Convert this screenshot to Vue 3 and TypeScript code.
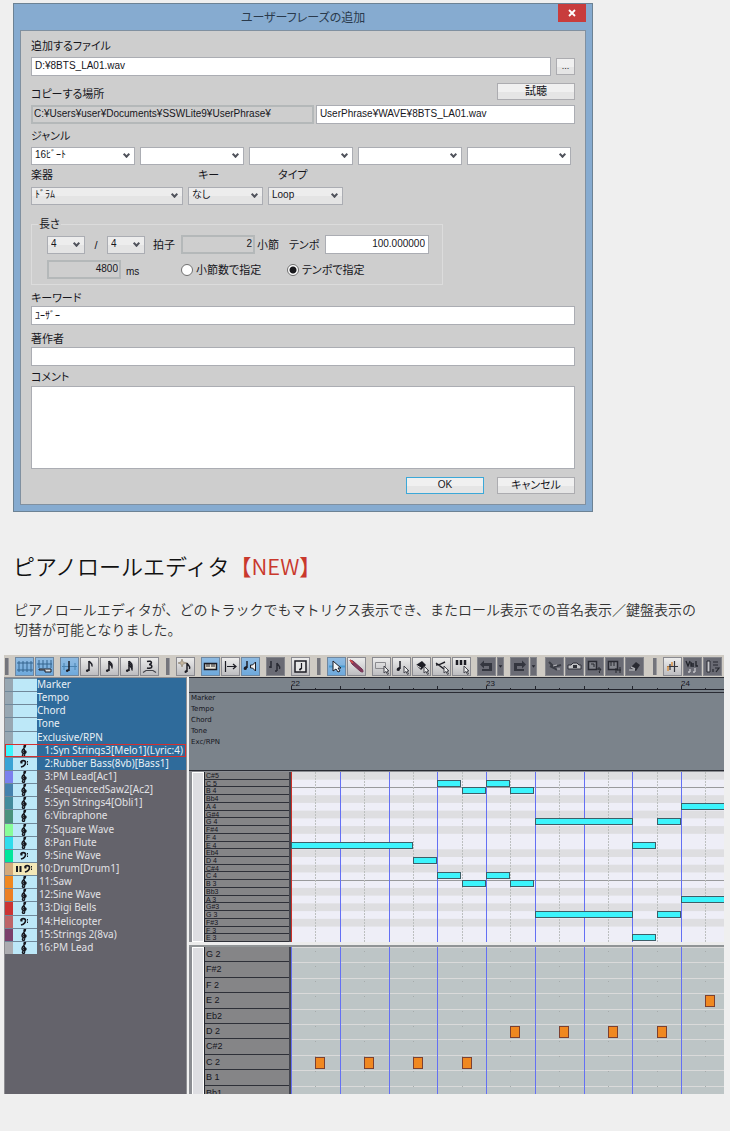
<script setup lang="ts">
import { ref } from 'vue'

const sourceFile = ref('D:¥8BTS_LA01.wav')
const targetFile = ref('UserPhrase¥WAVE¥8BTS_LA01.wav')
const tempo = ref('100.000000')
const keyword = ref('ﾕｰｻﾞｰ')
const author = ref('')
const comment = ref('')
const lengthMode = ref('tempo')
const genres = ['16ﾋﾞｰﾄ', '', '', '', '']

interface Shape { d: string; f?: string; s?: string; w?: number }
interface Tool { label: string; look: 'on' | 'off' | 'dim'; shapes: Shape[]; narrow?: boolean }
interface Group { grip?: boolean; wide?: boolean; tools: Tool[] }

const ink = '#1c1c24'
const arrow: Shape = { d: 'M12 9v7l2-1.500 1.500 3 1-.5-1.500-3H17z', f: '#eee', s: '#44454c', w: 1 }
const flags = (n: number): Shape[] => [
  { d: 'M9 4V14', s: ink, w: 1.5 },
  { d: 'M9 12.500c-2-.5-3.500.5-3 2 1.500 1 3 0 3-2z', f: ink },
  ...Array.from({ length: n }, (_, i) => ({ d: `M9 ${4 + i * 2}c1 2 4 2 3 5.500`, s: ink, w: 1.5 })),
]

const groups: Group[] = [
  { grip: true, tools: [] },
  {
    tools: [
      { label: 'グリッド', look: 'on', shapes: [{ d: 'M4 4V15M8 4V15M12 4V15M16 4V15M2 6H18M2 13H18', s: '#35658e', w: 1 }] },
      { label: 'グリッド鍵盤', look: 'on', shapes: [{ d: 'M4 3V11M8 3V11M12 3V11M16 3V11M2 7H17', s: '#35658e', w: 1 }, { d: 'M4 12H16V15H10V13H4z', f: '#dfe4e8', s: ink, w: 1 }] },
    ],
  },
  {
    tools: [
      { label: '4分音符', look: 'on', shapes: [{ d: 'M2 9.500H17M4 6V13M15 6V13', s: '#4b83b0', w: 1 }, ...flags(0)] },
      { label: '8分音符', look: 'off', shapes: flags(1) },
      { label: '16分音符', look: 'off', shapes: flags(2) },
      { label: '32分音符', look: 'off', shapes: flags(3) },
      { label: '3連符', look: 'off', shapes: [{ d: 'M7 4.500C13 3 12 7.500 9 7.500c4 0 4 5-2 3.500', s: ink, w: 1.6 }, { d: 'M3 15.500l3-2h7l3 2', s: '#44454c', w: 1.2 }] },
    ],
  },
  { grip: true, tools: [] },
  {
    tools: [
      { label: '新規音符', look: 'off', shapes: [{ d: 'M6 2l1 3 4 1-4 1-1 3-1-3-3-1 3-1z', f: '#c4b49a', s: '#a39a8c', w: 1 }, { d: 'M11 6V15M11 6c1 3 4 3 2.500 6', s: ink, w: 1.5 }, { d: 'M11 13c-3 0-3 3-1.500 3S11 15 11 13z', f: ink }] },
    ],
  },
  {
    tools: [
      { label: '鍵盤', look: 'on', shapes: [{ d: 'M3.500 6.500H15.500V12.500H3.500z', f: '#e8e4d8', s: ink, w: 1.5 }, { d: 'M6 7V10M8 7V10M11 7V10M13 7V10', s: ink, w: 1 }] },
      { label: 'ステップ', look: 'off', shapes: [{ d: 'M4.500 4V15M6 9.500H15M12 7l3 2.500-3 2.500', s: ink, w: 1.2 }] },
      { label: '発音', look: 'on', shapes: [{ d: 'M6 4V11', s: ink, w: 1.5 }, { d: 'M6 9c-4 0-4 4-2 4s2-1 2-4z', f: ink }, { d: 'M9.500 8h2l3-3v9l-3-3h-2z', f: '#eee', s: ink, w: 1 }] },
    ],
  },
  {
    tools: [
      { label: '声部', look: 'dim', shapes: [{ d: 'M5 4V11M3 10h2M11 6V14M11 6c1 3 4 3 2.500 6M9 14h2', s: '#292a32', w: 1.5 }] },
    ],
  },
  {
    tools: [
      { label: '音符枠', look: 'off', shapes: [{ d: 'M4 4H15V15H4z', f: '#e7e7e7', s: ink, w: 1.5 }, { d: 'M10.500 6V12', s: ink, w: 1.2 }, { d: 'M10.500 11c-3 0-3 2.500-1.500 2.500s1.500-1 1.500-2.500z', f: ink }] },
    ],
  },
  { grip: true, tools: [] },
  {
    tools: [
      { label: '選択', look: 'on', shapes: [{ d: 'M2 9.500H18', s: '#4b9bd0', w: 2 }, { d: 'M6 4V14l3-2 2 3 2-1-2-3h3z', f: '#f2f6f8', s: ink, w: 1 }] },
      { label: '鉛筆', look: 'off', shapes: [{ d: 'M3 3l3 1 9 8c2 3 1 4-2 2L5 7z', f: '#833a5c', s: '#703050', w: 1 }, { d: 'M3 3l3 3', s: '#d94d48', w: 1.5 }] },
    ],
  },
  {
    tools: [
      { label: '範囲選択', look: 'off', shapes: [{ d: 'M3.500 5.500H13.500V11.500H3.500z', s: '#8a8a8e', w: 1 }, arrow] },
      { label: '音符選択', look: 'off', shapes: [{ d: 'M8 4V12', s: ink, w: 1.5 }, { d: 'M8 10c-4 0-4 4-2 4s2-1 2-4z', f: ink }, arrow] },
      { label: '消しゴム', look: 'off', shapes: [{ d: 'M4 8l6-4 4 4-5 5z', f: ink }, { d: 'M4 8l5 3', s: '#ddd', w: 1 }, arrow] },
      { label: 'はさみ', look: 'off', shapes: [{ d: 'M13 5C11 6 9 8 4 8M4 6l4 3 4 3', s: ink, w: 1.5 }, arrow] },
      { label: '鍵盤選択', look: 'off', shapes: [{ d: 'M5 3V8M9 3V8M13 3V8', s: ink, w: 2.5 }, arrow] },
    ],
  },
  {
    tools: [
      { label: '元に戻す', look: 'dim', shapes: [{ d: 'M15 14V6H7V3.500L3 7.500l4 4V9h5v3H5v2z', f: '#34363f' }] },
      { label: '元に戻す一覧', look: 'dim', narrow: true, shapes: [{ d: 'M2 8h4L4 11z', f: '#24262f' }] },
    ],
  },
  {
    wide: true,
    tools: [
      { label: 'やり直し', look: 'dim', shapes: [{ d: 'M4 14V6h8V3.500l4 4-4 4V9H7v3h7v2z', f: '#34363f' }] },
      { label: 'やり直し一覧', look: 'dim', narrow: true, shapes: [{ d: 'M2 8h4L4 11z', f: '#24262f' }] },
    ],
  },
  {
    wide: true,
    tools: [
      { label: '切り取り', look: 'dim', shapes: [{ d: 'M4 5l5 5 7-2M5 9l4 2 3 2', s: '#3a3c44', w: 2 }, { d: 'M8 9l4-1M12 12h3', s: '#b8b8bc', w: 1 }] },
      { label: 'コピー', look: 'dim', shapes: [{ d: 'M3 8h3l2-2h4l2 2h2v4H3z', f: '#c3c3c6', s: '#2f3138', w: 1 }, { d: 'M8 8h4v3H8z', f: '#2f3138' }] },
      { label: '貼り付け', look: 'dim', shapes: [{ d: 'M3.500 4.500H11.500V12.500H3.500z', f: '#83858c', s: '#292a32', w: 1.5 }, { d: 'M6 7h3v3M12 12h4l-2 3 1 1M14 10v3', s: '#24262d', w: 1 }] },
      { label: '合成貼り付け', look: 'dim', shapes: [{ d: 'M3.500 4.500H12.500V12.500H3.500z', f: '#83858c', s: '#292a32', w: 1.5 }, { d: 'M6 5v4M9 5v4M11 11v5M12 13h4M15 10v6', s: '#24262d', w: 1 }] },
      { label: '削除', look: 'dim', shapes: [{ d: 'M5 11L11 5l4 3-4 6z', f: '#292a32' }, { d: 'M4 13h6M6 10l4 2', s: '#a9aaaf', w: 1.5 }] },
    ],
  },
  { grip: true, tools: [] },
  {
    tools: [
      { label: 'コントロール', look: 'off', shapes: [{ d: 'M4 9.500H15M11.500 4V15M7 7V13', s: '#33343c', w: 1.2 }, { d: 'M5 9V14M9 5V9', s: '#d99346', w: 1.5 }] },
      { label: 'ベロシティ', look: 'dim', shapes: [{ d: 'M3 4l2 5 2-5M8 7h3M8 5v4h3M13 4v5h2', s: '#22242b', w: 1.3 }, { d: 'M7 12v3M12 11v4M5 15h2M10 15h2', s: '#c4c4c8', w: 1.3 }] },
      { label: '音程表', look: 'dim', shapes: [{ d: 'M4 4h3v11H4z', f: '#c9c9cd', s: '#292a32', w: 1 }, { d: 'M10 5h5M10 8h5M12 11h4l-3 4M10 12v3', s: '#25272e', w: 1.2 }] },
    ],
  },
]

interface Track { name: string; num?: string; color: string; clef?: 'g' | 'f' | 'drum'; lit?: boolean; current?: boolean }
const tracks: Track[] = [
  ...['Marker', 'Tempo', 'Chord', 'Tone', 'Exclusive/RPN'].map((name) => ({ name, color: '#98a7b2', lit: true })),
  { num: '1:', name: 'Syn Strings3[Melo1](Lyric:4)', color: '#3cf4fc', clef: 'g', lit: true, current: true },
  { num: '2:', name: 'Rubber Bass(8vb)[Bass1]', color: '#39a3d5', clef: 'f', lit: true },
  { num: '3:', name: 'PM Lead[Ac1]', color: '#7b80ee', clef: 'g' },
  { num: '4:', name: 'SequencedSaw2[Ac2]', color: '#4581ad', clef: 'g' },
  { num: '5:', name: 'Syn Strings4[Obli1]', color: '#438b9c', clef: 'g' },
  { num: '6:', name: 'Vibraphone', color: '#4a927c', clef: 'g' },
  { num: '7:', name: 'Square Wave', color: '#88fc98', clef: 'g' },
  { num: '8:', name: 'Pan Flute', color: '#30dcec', clef: 'g' },
  { num: '9:', name: 'Sine Wave', color: '#00e69c', clef: 'f' },
  { num: '10:', name: 'Drum[Drum1]', color: '#d3aa7c', clef: 'drum' },
  { num: '11:', name: 'Saw', color: '#f08820', clef: 'g' },
  { num: '12:', name: 'Sine Wave', color: '#ec8024', clef: 'g' },
  { num: '13:', name: 'Digi Bells', color: '#cb3434', clef: 'g' },
  { num: '14:', name: 'Helicopter', color: '#bd6468', clef: 'f' },
  { num: '15:', name: 'Strings 2(8va)', color: '#7b406c', clef: 'g' },
  { num: '16:', name: 'PM Lead', color: '#acacb0', clef: 'g' },
]

const lanes = ['Marker', 'Tempo', 'Chord', 'Tone', 'Exc/RPN']
const highKeys = ['C#5', 'C 5', 'B 4', 'Bb4', 'A 4', 'G#4', 'G 4', 'F#4', 'F 4', 'E 4', 'Eb4', 'D 4', 'C#4', 'C 4', 'B 3', 'Bb3', 'A 3', 'G#3', 'G 3', 'F#3', 'F 3', 'E 3']
const lowKeys = ['G 2', 'F#2', 'F 2', 'E 2', 'Eb2', 'D 2', 'C#2', 'C 2', 'B 1', 'Bb1']

const highStep = 170 / highKeys.length
const lowStep = 154 / lowKeys.length
const beat = 48.75
const beats = Array.from({ length: 9 }, (_, i) => i)
const isBlack = (key: string) => key[1] !== ' '
const beatX = (n: number) => Math.round(n * beat)

// Start and length are counted in half beats.
const melody = [
  { start: 0, len: 5, key: 'E 4' }, { start: 5, len: 1, key: 'D 4' },
  ...['4', '3'].flatMap((o) => {
    const up = o === '4' ? '5' : '4'
    return [
      { start: 6, len: 1, key: `C ${up}` }, { start: 7, len: 1, key: `B ${o}` },
      { start: 8, len: 1, key: `C ${up}` }, { start: 9, len: 1, key: `B ${o}` },
      { start: 10, len: 4, key: `G ${o}` }, { start: 14, len: 1, key: `E ${o}` },
      { start: 15, len: 1, key: `G ${o}` }, { start: 16, len: 4, key: `A ${o}` },
    ]
  }),
]
const drums = [
  ...[1, 3, 5, 7].map((start) => ({ start, key: 'C 2' })),
  ...[9, 11, 13, 15].map((start) => ({ start, key: 'D 2' })),
  { start: 17, key: 'E 2' },
]
</script>

<template>
  <main class="page">
    <form class="dialog" @submit.prevent>
      <header class="titlebar">
        <span class="title">ユーザーフレーズの追加</span>
        <button type="button" class="close" aria-label="閉じる">
          <svg width="8" height="8" viewBox="0 0 8 8"><path d="M1 1l6 6M7 1L1 7" stroke="#fff" stroke-width="1.8" /></svg>
        </button>
      </header>
      <div class="body">
        <label class="lbl" for="src">追加するファイル</label>
        <div class="row file">
          <input id="src" v-model="sourceFile" class="box grow" type="text" />
          <button type="button" class="btn more">...</button>
        </div>
        <div class="row copy">
          <label class="lbl" for="dst">コピーする場所</label>
          <button type="button" class="btn wide">試聴</button>
        </div>
        <div class="row paths">
          <input class="box ro folder" type="text" readonly aria-label="フォルダ" value="C:¥Users¥user¥Documents¥SSWLite9¥UserPhrase¥" />
          <input id="dst" v-model="targetFile" class="box grow" type="text" />
        </div>
        <label class="lbl genre" for="genre0">ジャンル</label>
        <div class="row genres">
          <span v-for="(g, i) in genres" :key="i" class="sel white">
            <select :id="'genre' + i" aria-label="ジャンル"><option>{{ g }}</option></select>
          </span>
        </div>
        <div class="row kinds">
          <div class="kind inst">
            <label class="lbl" for="inst">楽器</label>
            <span class="sel"><select id="inst"><option>ﾄﾞﾗﾑ</option></select></span>
          </div>
          <div class="kind">
            <label class="lbl in" for="key">キー</label>
            <span class="sel"><select id="key"><option>なし</option></select></span>
          </div>
          <div class="kind">
            <label class="lbl in" for="type">タイプ</label>
            <span class="sel"><select id="type"><option>Loop</option></select></span>
          </div>
        </div>
        <fieldset class="length">
          <legend>長さ</legend>
          <div class="row meter">
            <span class="sel tiny"><select aria-label="拍数"><option>4</option></select></span>
            <span class="slash">/</span>
            <span class="sel tiny"><select aria-label="音価"><option>4</option></select></span>
            <span class="lbl unit">拍子</span>
            <input id="bars" class="box ro num" type="text" readonly value="2" />
            <label class="lbl bars" for="bars">小節</label>
            <label class="lbl tempo" for="tempo">テンポ</label>
            <input id="tempo" v-model="tempo" class="box num long" type="text" />
          </div>
          <div class="row meter second">
            <input id="ms" class="box ro num" type="text" readonly value="4800" />
            <label class="lbl ms" for="ms">ms</label>
            <label class="lbl radio"><input v-model="lengthMode" type="radio" value="bars" />小節数で指定</label>
            <label class="lbl radio"><input v-model="lengthMode" type="radio" value="tempo" />テンポで指定</label>
          </div>
        </fieldset>
        <label class="lbl kw" for="kw">キーワード</label>
        <input id="kw" v-model="keyword" class="box full" type="text" />
        <label class="lbl author" for="author">著作者</label>
        <input id="author" v-model="author" class="box full" type="text" />
        <label class="lbl comment" for="comment">コメント</label>
        <textarea id="comment" v-model="comment" class="box area"></textarea>
        <div class="row actions">
          <button type="submit" class="btn wide ok">OK</button>
          <button type="button" class="btn wide">キャンセル</button>
        </div>
      </div>
    </form>

    <h2 class="heading">ピアノロールエディタ<span class="new">【NEW】</span></h2>
    <p class="lead">ピアノロールエディタが、どのトラックでもマトリクス表示でき、またロール表示での音名表示／鍵盤表示の<br />切替が可能となりました。</p>

    <section class="editor">
      <div class="toolbar">
        <template v-for="(g, gi) in groups" :key="gi">
          <span v-if="g.grip" class="grip"></span>
          <div v-else class="group" :class="{ apart: g.wide }">
            <button v-for="t in g.tools" :key="t.label" type="button" class="tool" :class="[t.look, { narrow: t.narrow }]" :aria-label="t.label">
              <svg :width="t.narrow ? 7 : 19" height="19" :viewBox="t.narrow ? '0 0 8 19' : '0 0 19 19'">
                <path v-for="(s, si) in t.shapes" :key="si" :d="s.d" :fill="s.f || 'none'" :stroke="s.s || 'none'" :stroke-width="s.w || 0" />
              </svg>
            </button>
          </div>
        </template>
      </div>
      <div class="panes">
        <div class="tracks">
          <ul class="list">
            <li v-for="t in tracks" :key="(t.num || '') + t.name" class="track" :class="{ lit: t.lit, current: t.current }">
              <span class="swatch" :style="{ background: t.color }"></span>
              <span class="clef" :class="{ drum: t.clef === 'drum' }">
                <svg v-if="t.clef === 'g'" width="10" height="13" viewBox="0 0 10 13">
                  <path d="M5 12.500c-2 0-2-2-.5-2M5 12.500C6.500 12 5.500 6 5 3c0-2 1.500-3 1.500-1.500C6.500 4 3 5 3 7.500s4 2.500 4 .5-3-1.500-2 0" fill="none" stroke="#15151c" stroke-width="1.4" />
                </svg>
                <svg v-else-if="t.clef" width="20" height="13" :viewBox="t.clef === 'f' ? '4 0 20 13' : '0 0 20 13'">
                  <path v-if="t.clef === 'drum'" d="M2 4h2v6H2zM5.500 4h2v6h-2z" fill="#15151c" />
                  <path d="M11 5.500c0-2.500 4.500-2.500 4.500 0S13 9.500 11 10" fill="none" stroke="#15151c" stroke-width="1.6" />
                  <path d="M10.500 4.500h2v2h-2zM17 4h1v1.500h-1zM17 6.500h1V8h-1z" fill="#15151c" />
                </svg>
              </span>
              <span v-if="t.num" class="no">{{ t.num }}</span><span class="name">{{ t.name }}</span>
            </li>
          </ul>
        </div>
        <div class="roll">
          <div class="head">
            <svg class="ruler" height="14">
              <rect y="11" width="100%" height="1" fill="#22242c" />
              <g v-for="b in beats" :key="b">
                <path :d="`M${beatX(b) + 0.5} 8V12M${beatX(b + 0.5) + 0.5} 10V12`" stroke="#22242c" />
                <text v-if="b % 4 === 0" :x="beatX(b)" y="8">{{ 22 + b / 4 }}</text>
              </g>
            </svg>
            <ul class="lanes"><li v-for="l in lanes" :key="l">{{ l }}</li></ul>
          </div>
          <div class="part high">
            <span class="bar"></span>
            <ul class="keys"><li v-for="k in highKeys" :key="k">{{ k }}</li></ul>
            <svg class="grid" width="100%" height="170">
              <rect width="100%" height="170" fill="#eeeef7" />
              <template v-for="(k, i) in highKeys" :key="k">
                <rect v-if="isBlack(k)" :y="i * highStep" width="100%" :height="highStep" fill="#dedee1" />
                <rect v-if="k[0] === 'C' && k[1] === ' '" :y="Math.round((i + 1) * highStep)" width="100%" height="1" fill="#999a9c" />
              </template>
              <g v-for="b in beats" :key="b">
                <path :d="`M${beatX(b + 0.5) + 0.5} 0V170`" stroke="#bcbfbf" stroke-dasharray="2 1" />
                <rect :x="beatX(b)" width="1" height="170" fill="#6470f4" />
              </g>
              <rect width="1" height="170" fill="#cc3028" />
              <rect
                v-for="(n, i) in melody" :key="i"
                :x="beatX(n.start / 2) + 0.5" :y="Math.round(highKeys.indexOf(n.key) * highStep) + 0.5"
                :width="beatX(n.len / 2) - 1" height="6" fill="#3cf4fc" stroke="#3d5f68"
              />
            </svg>
          </div>
          <div class="part low">
            <span class="bar"></span>
            <ul class="keys"><li v-for="k in lowKeys" :key="k">{{ k }}</li></ul>
            <svg class="grid" width="100%" height="154">
              <rect width="100%" height="154" fill="#bdc5c6" />
              <rect v-for="(k, i) in lowKeys" :key="k" :y="Math.round(i * lowStep)" width="100%" height="1" fill="#dadada" />
              <g v-for="b in beats" :key="b">
                <path :d="`M${beatX(b + 0.5) + 0.5} 4V154`" stroke="#a6abab" stroke-dasharray="1 14" />
                <rect :x="beatX(b)" width="1" height="154" fill="#6470f4" />
              </g>
              <rect
                v-for="(n, i) in drums" :key="i"
                :x="beatX(n.start / 2) + 0.5" :y="Math.round(lowKeys.indexOf(n.key) * lowStep) + 2.5"
                width="9" height="11" fill="#f08820" stroke="#7d4030"
              />
            </svg>
          </div>
        </div>
      </div>
    </section>
  </main>
</template>

<style>
body {
  background: #efefef;
}
</style>

<style scoped>
* {
  box-sizing: border-box;
}
ul {
  list-style: none;
  margin: 0;
  padding: 0;
}
button, input, select, textarea {
  font: inherit;
  color: inherit;
  margin: 0;
  border-radius: 0;
}
svg {
  display: block;
}
.page {
  padding: 3px 6px 37px 4px;
  font-family: "Liberation Sans", "Noto Sans CJK JP", sans-serif;
}
.dialog {
  max-width: 580px;
  margin-left: 9px;
  padding: 0 6px 6px;
  background: #86abd0;
  border: 1px solid #6c8294;
  color: #16161c;
  font-size: 11px;
  line-height: 14px;
  font-feature-settings: "palt";
}
.titlebar {
  position: relative;
  height: 26px;
  display: flex;
  align-items: center;
  justify-content: center;
  color: #2a3a4c;
  font-size: 12px;
}
.title {
  margin-top: 2px;
}
.close {
  position: absolute;
  top: 0;
  right: 0;
  width: 28px;
  height: 18px;
  padding: 0;
  border: 0;
  background: #c83c3c;
  display: flex;
  align-items: center;
  justify-content: center;
}
.body {
  display: flex;
  flex-direction: column;
  background: #cecece;
  border: 1px solid #8090a0;
  padding: 8px 10px 10px;
}
.row {
  display: flex;
}
.lbl {
  white-space: nowrap;
}
.box {
  min-width: 0;
  height: 19px;
  padding: 0 3px 3px;
  background: #fff;
  border: 1px solid #abadb3;
  outline: 0;
  font-size: 10px;
}
.grow {
  flex: 1;
}
.ro {
  background: #cecece;
  border: 2px solid #b4b8b9;
  padding: 0 1px 2px;
}
.btn {
  height: 17px;
  padding: 0 0 1px;
  border: 1px solid #acacb0;
  background: linear-gradient(#f0f0f0 50%, #e5e5e5 50%);
  display: flex;
  align-items: center;
  justify-content: center;
}
.wide {
  width: 78px;
}
.ok {
  border-color: #3ca8d8;
  font-size: 10px;
}
.file {
  margin-top: 4px;
  gap: 5px;
  align-items: center;
}
.more {
  width: 19px;
  font-size: 9px;
}
.copy {
  margin-top: 7px;
  height: 18px;
  justify-content: space-between;
}
.copy .lbl {
  align-self: flex-end;
}
.paths {
  margin-top: 4px;
  gap: 2px;
}
.folder {
  width: 52%;
}
.genre {
  margin-top: 5px;
}
.genres {
  margin-top: 4px;
  gap: 5px;
  padding-right: 4px;
}
.genres .sel {
  flex: 1;
}
.sel {
  position: relative;
  display: block;
  height: 18px;
}
.sel select {
  display: block;
  width: 100%;
  height: 18px;
  padding: 0 14px 2px 3px;
  appearance: none;
  border: 1px solid #abadb3;
  background: linear-gradient(#ededed 50%, #e4e4e4 50%);
  font-size: 10px;
}
.sel.white select {
  background: #fff;
}
.sel::after {
  content: "";
  position: absolute;
  right: 6px;
  top: 5px;
  width: 3px;
  height: 3px;
  border: solid #50535c;
  border-width: 0 2px 2px 0;
  transform: rotate(45deg);
  pointer-events: none;
}
.kinds {
  margin-top: 3px;
  gap: 5px;
}
.kind {
  width: 75px;
}
.inst {
  width: 152px;
}
.kind .lbl {
  display: block;
  margin-bottom: 5px;
}
.kind .in {
  padding-left: 10px;
}
.length {
  width: 412px;
  max-width: 100%;
  margin: 12px 0 0;
  padding: 4px 12px 5px 15px;
  border: 1px solid #dcdcdc;
}
.length legend {
  margin-left: -9px;
  padding: 0 1px;
  height: 14px;
}
.meter {
  height: 19px;
  align-items: center;
}
.second {
  margin-top: 6px;
}
.tiny {
  width: 38px;
}
.slash {
  width: 22px;
  text-align: center;
}
.unit {
  width: 36px;
  padding-left: 8px;
}
.num {
  width: 74px;
  text-align: right;
}
.bars {
  width: 34px;
  padding-left: 2px;
}
.tempo {
  width: 36px;
}
.long {
  width: 104px;
}
.ms {
  width: 60px;
  padding-left: 5px;
  align-self: flex-end;
  font-size: 10px;
}
.radio {
  width: 106px;
  display: flex;
  align-items: center;
  gap: 3px;
}
.radio input {
  appearance: none;
  flex: none;
  width: 12px;
  height: 12px;
  border: 1px solid #707070;
  border-radius: 50%;
  background: #fff;
}
.radio input:checked {
  background: radial-gradient(circle, #18181c 0 3px, #fff 4px);
}
.kw {
  margin-top: 6px;
}
.full {
  width: 100%;
  margin-top: 1px;
}
.author {
  margin-top: 7px;
}
.comment {
  margin-top: 4px;
}
.area {
  width: 100%;
  height: 83px;
  margin-top: 2px;
  resize: none;
}
.actions {
  margin-top: 8px;
  gap: 13px;
  justify-content: flex-end;
}
.heading {
  margin: 37px 0 0 9px;
  font-family: "Noto Sans CJK JP", sans-serif;
  font-size: 22px;
  font-weight: 350;
  line-height: 32px;
  color: #111;
}
.new {
  color: #c9382c;
}
.lead {
  margin: 18px 0 16px 10px;
  font-family: "Noto Sans CJK JP", sans-serif;
  font-size: 14px;
  font-weight: 350;
  line-height: 20px;
  color: #333;
}
.editor {
  overflow: hidden;
  background: #cfcbc4;
}
.toolbar {
  display: flex;
  align-items: center;
  gap: 6px;
  height: 22px;
  padding: 0 1px;
}
.grip {
  flex: none;
  width: 4px;
  height: 17px;
  margin-left: 1px;
  background: #74757c;
  border: 1px solid #9b9ba0;
  border-width: 0 1px 0 0;
}
.grip:first-child {
  margin-left: 0;
}
.group {
  display: flex;
  gap: 1px;
}
.apart {
  margin-right: 2px;
}
.tool {
  width: 19px;
  height: 19px;
  padding: 0;
  border: 1px solid #8a8a90;
  overflow: hidden;
}
.tool svg {
  margin: -1px;
}
.tool.off {
  background: linear-gradient(#ececec, #bdbdc0);
}
.tool.on {
  background: linear-gradient(#8fbbe2, #6ea9dc);
  border-color: #6f87a0;
}
.tool.dim {
  background: #6a6b74;
  border-color: #85868c;
}
.tool.narrow {
  width: 7px;
}
.panes {
  display: grid;
  grid-template-columns: 183px 1fr;
  height: 417px;
}
.tracks {
  border: solid #8e8e92;
  border-width: 1px 1px 0;
  background: #64636b;
}
.list {
  display: grid;
  grid-template-rows: repeat(21, 1fr);
  height: 276px;
}
.track {
  display: flex;
  align-items: center;
  min-height: 0;
  color: #e2e2e6;
  font-family: "Noto Sans", sans-serif;
  font-size: 10px;
  line-height: 13px;
  white-space: nowrap;
}
.track.lit {
  background: #2f6b9b;
  color: #e8f0f6;
}
.track.current {
  position: relative;
  z-index: 1;
  outline: 1px solid #d43030;
  outline-offset: -1px;
}
.swatch {
  width: 8px;
  height: 100%;
  border-top: 1px solid #70889a;
}
.clef {
  width: 24px;
  height: 100%;
  padding-right: 2px;
  border-top: 1px solid #70889a;
  background: #bde8f8;
  display: flex;
  justify-content: center;
  overflow: hidden;
}
.clef svg {
  margin-top: -1px;
}
.clef.drum {
  background: #f4e8b8;
}
.current .swatch,
.current .clef {
  border-color: #d43030;
}
.no {
  width: 16px;
  text-align: right;
}
.roll {
  min-width: 0;
  margin-left: 2px;
  display: flex;
  flex-direction: column;
  background: #8b8d92;
  box-shadow: -2px 0 #f0f0f0;
}
.head {
  height: 94px;
  background: #7b838b;
  border: solid #2a2c34;
  border-width: 1px 0;
  overflow: hidden;
}
.ruler {
  width: calc(100% - 102px);
  margin-left: 102px;
  font-size: 8px;
  fill: #16161e;
}
.lanes {
  border-top: 1px solid #2a2c34;
  padding: 0 2px;
  color: #16161e;
  font-family: "DejaVu Sans", sans-serif;
  font-size: 7px;
  line-height: 11px;
}
.part {
  display: grid;
  grid-template-columns: 12px 87px minmax(0, 1fr);
  padding-left: 3px;
  overflow: hidden;
}
.high {
  height: 173px;
  margin-top: 1px;
  border-bottom: 3px solid #ececec;
}
.low {
  height: 149px;
  border-top: 2px solid #909496;
}
.bar {
  background: #dedee2;
  border: 1px solid #fff;
}
.keys {
  display: grid;
  height: 170px;
  background: #858587;
  border-left: 1px solid #22242c;
  border-right: 2px solid #44464e;
  color: #16161e;
}
.high .keys {
  grid-template-rows: repeat(22, 1fr);
  font-size: 7px;
  line-height: 7px;
}
.low .keys {
  grid-template-rows: repeat(10, 1fr);
  height: 154px;
  font-size: 9px;
  line-height: 14px;
}
.keys li {
  min-height: 0;
  padding-left: 1px;
  border-bottom: 1px solid #2e3038;
}
</style>
